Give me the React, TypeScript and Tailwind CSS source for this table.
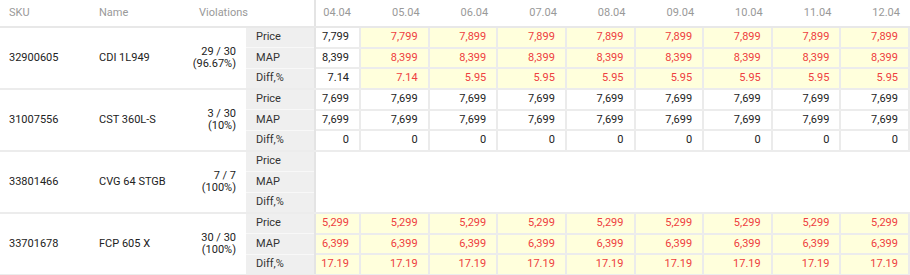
import React from 'react'

type Cell = { v: string; hi?: boolean }
type Group = {
	sku: string
	name: string
	count: string
	pct: string
	rows: Cell[][] | null
}

const dates = ['04.04', '05.04', '06.04', '07.04', '08.04', '09.04', '10.04', '11.04', '12.04']
const labels = ['Price', 'MAP', 'Diff,%']

const row = (first: string, firstHi: boolean, rest: string[], restHi: boolean): Cell[] => [
	{ v: first, hi: firstHi },
	...rest.map((v) => ({ v, hi: restHi })),
]

const groups: Group[] = [
	{
		sku: '32900605',
		name: 'CDI 1L949',
		count: '29 / 30',
		pct: '(96.67%)',
		rows: [
			row('7,799', false, ['7,799', '7,899', '7,899', '7,899', '7,899', '7,899', '7,899', '7,899'], true),
			row('8,399', false, Array(8).fill('8,399'), true),
			row('7.14', false, ['7.14', '5.95', '5.95', '5.95', '5.95', '5.95', '5.95', '5.95'], true),
		],
	},
	{
		sku: '31007556',
		name: 'CST 360L-S',
		count: '3 / 30',
		pct: '(10%)',
		rows: [
			row('7,699', false, Array(8).fill('7,699'), false),
			row('7,699', false, Array(8).fill('7,699'), false),
			row('0', false, Array(8).fill('0'), false),
		],
	},
	{
		sku: '33801466',
		name: 'CVG 64 STGB',
		count: '7 / 7',
		pct: '(100%)',
		rows: null,
	},
	{
		sku: '33701678',
		name: 'FCP 605 X',
		count: '30 / 30',
		pct: '(100%)',
		rows: [
			row('5,299', true, Array(8).fill('5,299'), true),
			row('6,399', true, Array(8).fill('6,399'), true),
			row('17.19', true, Array(8).fill('17.19'), true),
		],
	},
]

const GroupRow = ({ g }: { g: Group }) => (
	<div className="flex h-[62px] border-b-2 border-[#ececec]">
		<div className="w-[90px] shrink-0 flex items-center pl-[9px] text-[#222]">{g.sku}</div>
		<div className="w-[100px] shrink-0 flex items-center pl-[9px] text-[#222]">{g.name}</div>
		<div className="w-[56px] shrink-0 flex flex-col justify-center items-end pr-[10px] text-[#222] leading-[12px]">
			<span>{g.count}</span>
			<span>{g.pct}</span>
		</div>
		<div className="w-[70px] shrink-0 flex flex-col bg-[#efefef] border-r-2 border-[#e4e4e4]">
			{labels.map((l, i) => (
				<div
					key={l}
					className={`flex-1 flex items-center pl-[10px] text-[#333] ${
						i < 2 ? 'border-b border-[#f8f8f8]' : ''
					}`}
				>
					{l}
				</div>
			))}
		</div>
		<div className="flex-1 flex flex-col">
			{g.rows &&
				g.rows.map((r, ri) => (
					<div key={ri} className={`flex-1 flex ${ri < 2 ? 'border-b-2 border-[#ececec]' : ''}`}>
						{r.map((c, ci) => (
							<div
								key={ci}
								className={`${ci === 0 ? 'w-[45px]' : 'flex-1'} flex items-center justify-end pr-[10px] border-r-2 border-[#ebebeb] ${
									c.hi ? 'bg-[#ffffdc] text-[#ee4040]' : 'bg-white text-[#222]'
								}`}
							>
								{c.v}
							</div>
						))}
					</div>
				))}
		</div>
	</div>
)

export default function App() {
	return (
		<div className="w-[910px] h-[275px] overflow-hidden bg-white font-['Roboto',sans-serif] text-[11px]">
			<div className="flex h-[28px] border-b-2 border-[#e8e8e8] text-[#999]">
				<div className="w-[90px] shrink-0 flex items-center pl-[9px]">SKU</div>
				<div className="w-[100px] shrink-0 flex items-center pl-[9px]">Name</div>
				<div className="w-[126px] shrink-0 flex items-center pl-[9px] border-r-2 border-[#e4e4e4]">
					Violations
				</div>
				<div className="flex-1 flex">
					{dates.map((d, i) => (
						<div
							key={d}
							className={`${i === 0 ? 'w-[45px]' : 'flex-1'} flex items-center justify-end pr-[10px]`}
						>
							{d}
						</div>
					))}
				</div>
			</div>
			{groups.map((g) => (
				<GroupRow key={g.sku} g={g} />
			))}
		</div>
	)
}
